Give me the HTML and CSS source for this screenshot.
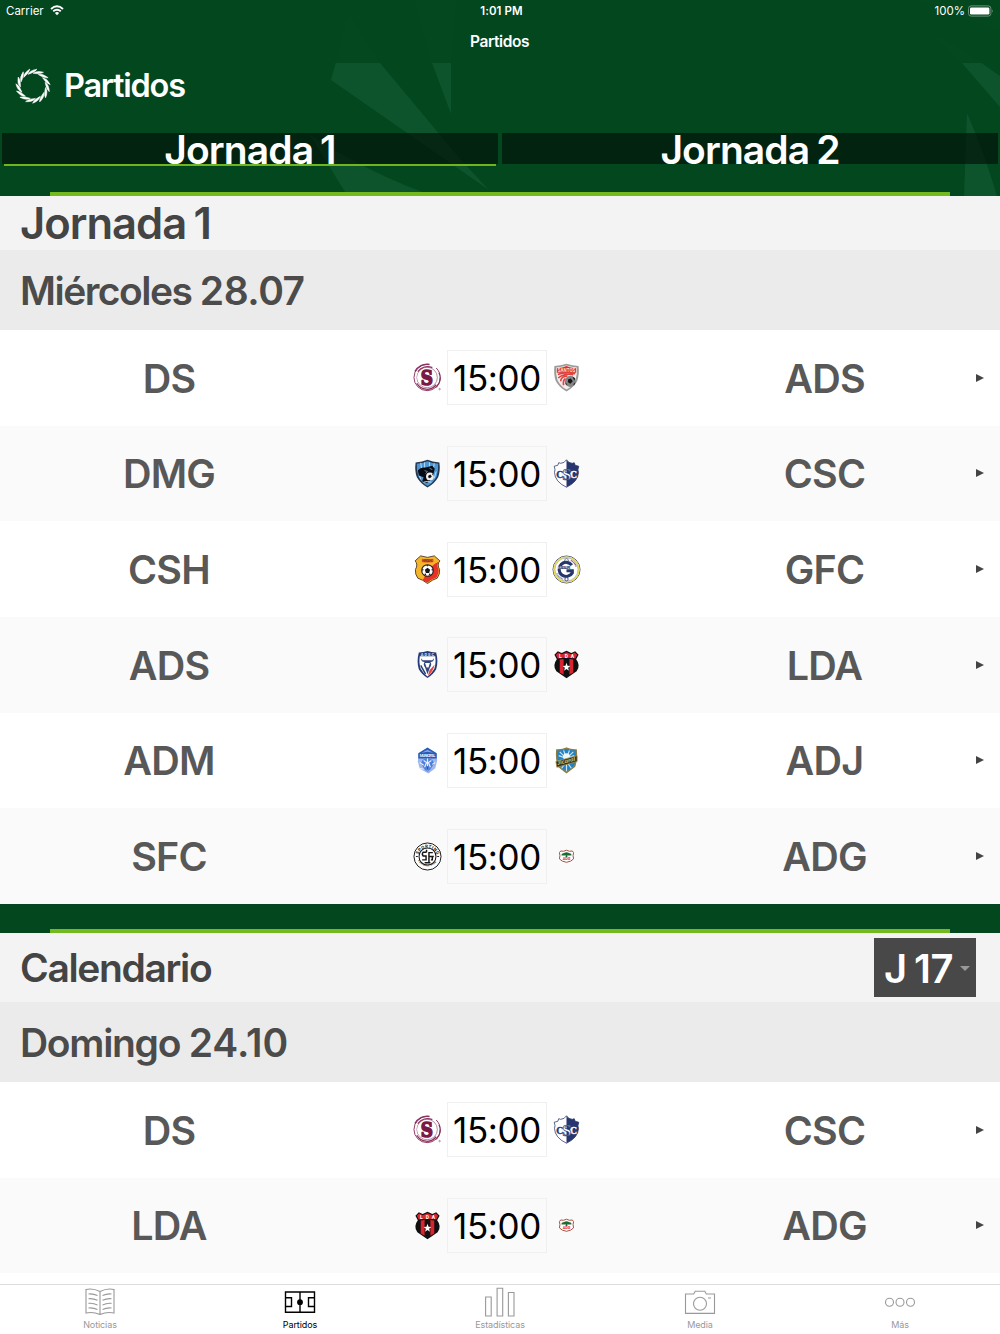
FILE: index.html
```html
<!DOCTYPE html>
<html lang="es">
<head>
<meta charset="UTF-8">
<meta name="viewport" content="width=device-width, initial-scale=1.0">
<title>Partidos</title>
<link rel="stylesheet" href="styles.css">
</head>
<body>

<!-- Escudos de los equipos -->
<svg class="sprites" aria-hidden="true">
  <symbol id="saprissa" viewBox="0 0 30 30">
    <g fill="none" stroke="#8a3560">
      <circle cx="14.6" cy="15" r="13.6" stroke-width="1" stroke-dasharray="66 8 6 6" />
      <path d="M2 9A14 14 0 0 1 17 1.5M27 10A13.5 13.5 0 0 1 24 25" stroke-width="1.5" />
      <path d="M4 21A12 12 0 0 0 24 22.5M5 9A12 12 0 0 1 20 4.8" stroke-width="1.3" />
      <circle cx="14.6" cy="15" r="10.6" stroke-width=".6" />
    </g>
    <circle cx="14" cy="15" r="9.6" fill="#fff" />
    <text x="8" y="22.8" font-family="DejaVu Serif" font-weight="bold" font-size="21.5" textLength="12.600" lengthAdjust="spacingAndGlyphs" fill="#7b1744" stroke="#7b1744" stroke-width="1.7">S</text>
    <circle cx="27.5" cy="27" r=".8" fill="none" stroke="#8a3560" stroke-width=".5" />
  </symbol>
  <symbol id="santos" viewBox="0 0 30 30">
    <path d="M2.5 3Q9 2.7 15 .8Q21 2.7 27.5 3Q28.5 12 26 19Q22 26 15 29.5Q8 26 4 19Q1.500 12 2.500 3Z" fill="#9b9b9b" />
    <path d="M4.300 4.600Q10 4.200 15 2.500Q20 4.200 25.700 4.600Q26.300 12 24.200 18Q21 24 15 27.500Q9 24 5.800 18Q3.700 12 4.300 4.600Z" fill="#f3eeee" />
    <path d="M5 5.500Q11 5 15 3.200Q19 5 25 5.500V10H5Z" fill="#d8302e" />
    <path d="M6 12Q14 8.500 24 11M6.500 15.500Q12 10.500 22 12M9 19Q9 14 16 13.500M12 23Q11 18 14 16" fill="none" stroke="#e1403c" stroke-width="1.700" />
    <text x="6" y="9.200" font-family="Roboto" font-weight="bold" font-size="4.600" textLength="18" fill="#f8dcdc">SANTOS</text>
    <circle cx="19" cy="19" r="5.700" fill="#858585" />
    <path d="M16.500 17L19.500 16L21.500 19L19 21.500L16.500 20ZM21 14L24 16L23 18ZM14 20L16 23L14 22ZM22 22L24 20L23 23Z" fill="#151515" />
  </symbol>
  <symbol id="guadalupe" viewBox="0 0 30 30">
    <circle cx="15" cy="15" r="14" fill="#fff" stroke="#26314f" stroke-width=".8" />
    <circle cx="15" cy="15" r="12.900" fill="none" stroke="#e8dc4c" stroke-width="1.300" />
    <circle cx="15" cy="15" r="11.900" fill="none" stroke="#55607b" stroke-width=".4" />
    <path d="M20.500 10.500A7.300 7.300 0 1 0 21 18.500V16.300H15" fill="none" stroke="#24366d" stroke-width="3.200" />
    <rect x="5.500" y="11.700" width="13" height="2.800" fill="#fff" />
    <text x="6" y="14.300" font-family="Roboto" font-weight="bold" font-size="3.400" textLength="13" fill="#24366d">GUADALUPE</text>
    <path d="M19.500 5.500A11 11 0 0 1 25 12" fill="none" stroke="#a95365" stroke-width="1.500" stroke-dasharray="1 .5" />
    <path d="M5 19A11 11 0 0 0 12 25" fill="none" stroke="#59617d" stroke-width="1.200" stroke-dasharray="1 .6" />
    <path d="M13 5L15 3.500L17 5L16.500 7H13.500Z" fill="none" stroke="#35415f" stroke-width=".7" />
    <circle cx="15" cy="25" r="1.700" fill="#fff" stroke="#35415f" stroke-width=".9" />
  </symbol>
  <symbol id="guapiles" viewBox="0 0 30 30">
    <path d="M2.700 3.500Q10 3 15 .8Q20 3 27.300 3.500Q28.500 12 26 19Q22 26 15 29.500Q8 26 4 19Q1.500 12 2.700 3.500Z" fill="#24364f" />
    <path d="M4 4.800Q10.500 4.300 15 2.200Q19.500 4.300 26 4.800Q26.500 12 24.500 18Q21 24.500 15 28Q9 24.500 5.500 18Q3.500 12 4 4.800Z" fill="#4b97d5" />
    <path d="M8 4L9 11M12 3.500V10M17 3.500V10M22 4.500L21 10M6 15L8 21M24 13L22 20" stroke="#bddcf2" stroke-width="1" />
    <path d="M5 12Q8 8 13 8.800L20 7L22.500 10L21 16L18 22L14 25L9.500 23L11 19L6 17Z" fill="#080b12" />
    <path d="M12 12L15 13L13 15M17 9.500L20 11" fill="none" stroke="#8ba2b8" stroke-width=".8" />
    <circle cx="17.500" cy="18" r="4" fill="#f2f2f2" />
    <path d="M16 17L18 16L19.500 18L17.500 20L15.500 19ZM20 14.500L21.500 17L20 16.500Z" fill="#111" />
    <path d="M11 24Q15 22.500 19 24" fill="none" stroke="#d4e4ef" stroke-width="1" />
  </symbol>
  <symbol id="cartagines" viewBox="0 0 30 30">
    <path d="M15 .8Q13 4.300 9 4.500L7 3.800L6 6.500L2.300 7.500Q3.800 11 2.600 14Q3 23.500 15 29.200Q27 23.500 27.400 14Q26.200 11 27.700 7.500L24 6.500L23 3.800L21 4.500Q17 4.300 15 .8Z" fill="#fff" stroke="#27366f" stroke-width=".8" />
    <path d="M15 .8Q17 4.300 21 4.500L23 3.800L24 6.500L27.700 7.500Q26.200 11 27.400 14Q27 23.500 15 29.200Z" fill="#27366f" />
    <g font-family="Liberation Serif" font-weight="bold" stroke-width=".4">
      <text x="4.300" y="19.800" font-size="10" fill="#27366f" stroke="#27366f">C</text>
      <text x="18.500" y="19.800" font-size="10" fill="#fff" stroke="#fff">C</text>
      <text x="10.500" y="21.500" font-size="17" fill="#fff" stroke="#27366f" stroke-width=".7">S</text>
    </g>
  </symbol>
  <symbol id="herediano" viewBox="0 0 30 30">
    <path d="M8 .9Q15 4 22 .9L27.800 6Q24.500 10 27.500 15Q28 20 25 24Q20 25.500 15 29.500Q10 25.500 5 24Q2 20 2.500 15Q5.500 10 2.200 6Z" fill="#f5b52a" stroke="#4b3320" stroke-width=".9" />
    <path d="M26.500 7Q18 10 10 26L15 28.500Q19 25 24.500 23Q27 19 26.500 15Q24 11 26.500 7Z" fill="#e6322b" />
    <path d="M9 3.800Q15 5.500 21 3.800V7.500Q15 8.800 9 7.500Z" fill="#e78423" />
    <text x="9.300" y="7.500" font-family="Roboto" font-weight="bold" font-size="3.300" textLength="11.500" fill="#992d24">HEREDIANO</text>
    <circle cx="15" cy="16" r="6" fill="#fff" stroke="#191919" stroke-width="1.100" />
    <path d="M15 13.300L17.700 15.300L16.700 18.500H13.300L12.300 15.300ZM13.500 10.500H16.500L15 12ZM9.500 14L11 15L10 17ZM20.500 14L19 15L20 17ZM11.500 20L13 19L14 21.500ZM18.500 20L17 19L16 21.500Z" fill="#151515" />
  </symbol>
  <symbol id="sancarlos" viewBox="0 0 30 30">
    <path d="M6 2.500Q11 2.500 15 1Q19 2.500 24 2.500Q26.500 12 24 20Q20.500 26 15 29Q9.500 26 6 20Q3.500 12 6 2.500Z" fill="#253a78" />
    <path d="M7 6.500H23Q24 14 22 19.500Q19.500 24 15 27.500Q10.500 24 8 19.500Q6 14 7 6.500Z" fill="#fff" />
    <text x="8" y="5.900" font-family="Roboto" font-weight="bold" font-size="4.200" textLength="14" fill="#dfe3ef">ADSC</text>
    <path d="M8.500 8.500Q8 12 12 12.500Q10 15 12.500 18L15 25L17.500 18Q20 15 18 12.500Q22 12 21.500 8.500L20 10.500H10Z" fill="#32477f" />
    <path d="M12.500 13.500H17.500L16 18H14Z" fill="#fff" />
    <path d="M22.500 15L17 21L15.500 26.500Q20.500 23 22.500 15Z" fill="#e9433f" />
    <path d="M8 16L13 25" stroke="#253a78" stroke-width="1.500" />
  </symbol>
  <symbol id="alajuelense" viewBox="0 0 30 30">
    <path d="M6 1.200L10 3L15 .8L20 3L24 1.200L27.500 5L25 9.500Q30 16 25.500 22L15 29.300L4.500 22Q0 16 5 9.500L2.500 5Z" fill="#101010" />
    <path d="M6.500 2.500L10 4.300L15 2.200L20 4.300L23.500 2.500L26 5L24 8.800Q15 7 6 8.800L4 5Z" fill="#da2633" />
    <text x="7.300" y="7.800" font-family="Roboto" font-weight="bold" font-size="5" textLength="15.500" fill="#fff">LDA</text>
    <path d="M8 9.700L12 9.200V25.500L8 23.300ZM18 9.200L22 9.700V23.300L18 25.500Z" fill="#d92331" />
    <path d="M15 13.300L16.100 16.300L19 16.500L16.700 18.400L17.500 21.500L15 19.700L12.500 21.500L13.300 18.400L11 16.500L13.900 16.300Z" fill="#fff" />
  </symbol>
  <symbol id="perez" viewBox="0 0 30 30">
    <path d="M15 2L24.500 7.500L25 15L23 23L16 28.500L7 23.500L5 16L5.500 7.500Z" fill="#9db8eb" />
    <path d="M15 1.500L24.500 7.500V13H5.500V7.500Z" fill="#285bb8" />
    <path d="M9 7L15 4L21 7L15 6Z" fill="#86a5df" />
    <text x="7" y="11" font-family="Roboto" font-weight="bold" font-size="4" textLength="16" fill="#e9efff">MUNICIPAL</text>
    <path d="M10 14.500Q15 11 20 14.500L22 18L18 24L15 27L12 24L8 18Z" fill="#4f7fdb" />
    <path d="M11 15L14 17L12 22M19 15L16 17L18 22M15 13V26M7 17L11 20M23 17L20 19M6 23L11 24" fill="none" stroke="#e8efff" stroke-width="1.200" />
    <path d="M14 21L16 21L15 27Z" fill="#2857b5" />
  </symbol>
  <symbol id="jicaral" viewBox="0 0 30 30">
    <path d="M5 4Q11 4.200 15 2.200Q19 4.200 25 4Q26 13 23.500 21L15 27.500L6.500 21Q4 13 5 4Z" fill="#2382c6" stroke="#8e7c43" stroke-width="1.400" />
    <path d="M15 13L8 6M15 13L12 4.500M15 13L18 4.500M15 13L22 6M15 13L7 10M15 13L23 10M15 16L10 23M15 16L15 26M15 16L20 23" stroke="#cae9f8" stroke-width="1.200" />
    <circle cx="15" cy="11" r="3.500" fill="#eaf8fc" />
    <path d="M4 16L26 10L26 16L5 22Z" fill="#332f1d" stroke="#a68e46" stroke-width=".8" />
    <text x="6" y="19.700" transform="rotate(-14 6 19.700)" font-family="Lato" font-style="italic" font-weight="bold" font-size="6" textLength="19" lengthAdjust="spacingAndGlyphs" fill="#d8c57a">Jicaral</text>
  </symbol>
  <symbol id="sporting" viewBox="0 0 30 30">
    <circle cx="15" cy="15" r="14" fill="#fff" stroke="#161616" stroke-width="1" />
    <circle cx="15" cy="15" r="8.800" fill="#fff" stroke="#161616" stroke-width="1.100" />
    <path id="arco-sup" d="M5.300 14A9.900 9.900 0 0 1 24.700 14" fill="none" />
    <path id="arco-inf" d="M4 17.500A11.800 11.800 0 0 0 26 17.500" fill="none" />
    <g font-family="Roboto" font-weight="bold" fill="#161616">
      <text font-size="4.600"><textPath href="#arco-sup" startOffset="4%" textLength="25">SPORTING</textPath></text>
      <text font-size="2.500"><textPath href="#arco-inf" startOffset="8%" textLength="22">FOOTBALL CLUB</textPath></text>
    </g>
    <path d="M14 10.500H10.500Q8.800 12.500 10.500 14.500H13.500V18.500H9.500M20.500 11H16.500V21M16.500 15H21.500M20 15V18.500H18.500M14 8V10.500M12 21.500H18" fill="none" stroke="#161616" stroke-width="1.500" />
    <path d="M3 15H5M25 15H27" stroke="#161616" stroke-width="1" />
  </symbol>
  <symbol id="guanacasteca" viewBox="0 0 30 30">
    <path d="M9 9.300Q12 10.300 15 8.500Q18 10.300 21 9.300L22.300 11Q21.300 14 22.300 17.500Q20 20.300 15 21Q10 20.300 7.700 17.500Q8.700 14 7.700 11Z" fill="#fff" stroke="#a8483c" stroke-width="1" />
    <path d="M9.600 13.700Q9.600 12 12.500 11.500Q15 9.900 17.500 11.500Q20.400 12 20.400 13.700Q17 14.200 15.800 13.700L16 15.500H14L14.200 13.700Q12 14.200 9.600 13.700Z" fill="#1d6b32" />
    <text x="11" y="18.800" font-family="Roboto" font-weight="bold" font-size="4.500" textLength="8" lengthAdjust="spacingAndGlyphs" fill="#e3241d">ADG</text>
  </symbol>
</svg>

<div class="screen">
  <header class="header">
    <svg class="header-art" viewBox="0 0 1000 196" preserveAspectRatio="none" aria-hidden="true">
      <path d="M349 15L331 80L489 190L461 160L380 63ZM415 0L432 63L451 114V63L456 0ZM310 135L345 192H422Q360 168 310 135ZM934 34L961 62L1000 107V76L980 62ZM967 113L964 196H997Q984 152 967 113ZM918 0L1000 31V12L965 0Z" />
    </svg>
    <div class="nav">
      <div class="status">
        <div class="status-side">
          <span>Carrier</span>
          <svg width="14" height="11" viewBox="0 0 14 11">
            <path d="M1 4Q7 -1.300 13 4M3.200 6.300Q7 3.200 10.800 6.300" fill="none" stroke="#fff" stroke-width="1.900" />
            <path d="M4.900 7.900Q7 6.300 9.100 7.900L7 10.200Z" fill="#fff" />
          </svg>
        </div>
        <strong>1:01 PM</strong>
        <div class="status-side right">
          <span>100%</span>
          <svg width="26" height="12" viewBox="0 0 26 12">
            <rect x=".5" y=".9" width="22.400" height="10.200" rx="2.600" fill="none" stroke="#6b9079" />
            <rect x="2" y="2.400" width="19.400" height="7.200" rx="1.300" fill="#fff" />
            <path d="M24.200 4.500Q25.600 6 24.200 7.500Z" fill="#8aa795" />
          </svg>
        </div>
      </div>
      <div class="nav-title">Partidos</div>
    </div>

    <div class="brand">
      <svg class="brand-logo" viewBox="-18 -18 36 36">
        <g fill="#fff" stroke="#fff" stroke-width=".5">
          <path id="hoja" d="M-5 -11.600Q-3 -15.900 4 -16.800Q2.200 -13.700 -5 -11.600Z" />
          <use href="#hoja" transform="rotate(24)" />
          <use href="#hoja" transform="rotate(48)" />
          <use href="#hoja" transform="rotate(72)" />
          <use href="#hoja" transform="rotate(96)" />
          <use href="#hoja" transform="rotate(120)" />
          <use href="#hoja" transform="rotate(144)" />
          <use href="#hoja" transform="rotate(168)" />
          <use href="#hoja" transform="rotate(192)" />
          <use href="#hoja" transform="rotate(216)" />
          <use href="#hoja" transform="rotate(240)" />
          <use href="#hoja" transform="rotate(264)" />
          <use href="#hoja" transform="rotate(288)" />
          <use href="#hoja" transform="rotate(312)" />
          <use href="#hoja" transform="rotate(336)" />
        </g>
      </svg>
      <h1>Partidos</h1>
    </div>

    <div class="tabs">
      <div class="tab active">Jornada 1</div>
      <div class="tab">Jornada 2</div>
    </div>
    <div class="line"></div>
  </header>

  <main class="content">
    <h2 class="title title-jornada">Jornada 1</h2>
    <h3 class="date">Miércoles <span>28.07</span></h3>
    <div class="matches">
      <div class="match">
        <span class="team">DS</span>
        <div class="score"><svg><use href="#saprissa" /></svg><span class="time">15:00</span><svg><use href="#santos" /></svg></div>
        <span class="team away">ADS</span><i class="arrow"></i>
      </div>
      <div class="match">
        <span class="team">DMG</span>
        <div class="score"><svg><use href="#guapiles" /></svg><span class="time">15:00</span><svg><use href="#cartagines" /></svg></div>
        <span class="team away">CSC</span><i class="arrow"></i>
      </div>
      <div class="match">
        <span class="team">CSH</span>
        <div class="score"><svg><use href="#herediano" /></svg><span class="time">15:00</span><svg><use href="#guadalupe" /></svg></div>
        <span class="team away">GFC</span><i class="arrow"></i>
      </div>
      <div class="match">
        <span class="team">ADS</span>
        <div class="score"><svg><use href="#sancarlos" /></svg><span class="time">15:00</span><svg><use href="#alajuelense" /></svg></div>
        <span class="team away">LDA</span><i class="arrow"></i>
      </div>
      <div class="match">
        <span class="team">ADM</span>
        <div class="score"><svg><use href="#perez" /></svg><span class="time">15:00</span><svg><use href="#jicaral" /></svg></div>
        <span class="team away">ADJ</span><i class="arrow"></i>
      </div>
      <div class="match">
        <span class="team">SFC</span>
        <div class="score"><svg><use href="#sporting" /></svg><span class="time">15:00</span><svg><use href="#guanacasteca" /></svg></div>
        <span class="team away">ADG</span><i class="arrow"></i>
      </div>
    </div>

    <div class="divider"><div class="line"></div></div>

    <div class="title title-calendario">
      <h2>Calendario</h2>
      <div class="select">J 17<i></i></div>
    </div>
    <h3 class="date date-domingo">Domingo <span>24.10</span></h3>
    <div class="matches">
      <div class="match">
        <span class="team">DS</span>
        <div class="score"><svg><use href="#saprissa" /></svg><span class="time">15:00</span><svg><use href="#cartagines" /></svg></div>
        <span class="team away">CSC</span><i class="arrow"></i>
      </div>
      <div class="match">
        <span class="team">LDA</span>
        <div class="score"><svg><use href="#alajuelense" /></svg><span class="time">15:00</span><svg><use href="#guanacasteca" /></svg></div>
        <span class="team away">ADG</span><i class="arrow"></i>
      </div>
    </div>
  </main>

  <nav class="tabbar">
    <a>
      <svg viewBox="0 0 32 32">
        <path d="M16 5.500Q9 2 2 3.500V27Q9 25.500 16 28.500Q23 25.500 30 27V3.500Q23 2 16 5.500V28.500M4.500 8Q9 7.500 13.500 9.500M4.500 12.700Q9 12.200 13.500 14.200M4.500 17.400Q9 16.900 13.500 18.900M4.500 22Q9 21.500 13.500 23.500M27.500 8Q23 7.500 18.500 9.500M27.500 12.700Q23 12.200 18.500 14.200M27.500 17.400Q23 16.900 18.500 18.900M27.500 22Q23 21.500 18.500 23.500" />
      </svg>
      Noticias
    </a>
    <a class="current">
      <svg viewBox="0 0 32 32">
        <path d="M1.500 6H30.500V26.300H1.500ZM16 6V26.300M1.500 11.800H7.500V20.500H1.500M30.500 11.800H24.500V20.500H30.500" />
        <circle cx="16" cy="16.200" r="2.200" fill="#000" />
      </svg>
      Partidos
    </a>
    <a>
      <svg viewBox="0 0 32 32">
        <path d="M1.600 11H7.200V30H1.600ZM13.100 2.200H18.700V30H13.100ZM24.400 6.500H30V30H24.400Z" />
      </svg>
      Estadísticas
    </a>
    <a>
      <svg viewBox="0 0 32 32">
        <path d="M1.500 8H9.700L11.200 5.200H20.800L22.300 8H30.500V27.400H1.500ZM24 12H27" />
        <circle cx="16" cy="17.800" r="6.500" />
      </svg>
      Media
    </a>
    <a>
      <svg viewBox="0 0 32 32">
        <circle cx="5.500" cy="16.300" r="4" /><circle cx="16" cy="16.300" r="4" /><circle cx="26.500" cy="16.300" r="4" />
      </svg>
      Más
    </a>
  </nav>
</div>

</body>
</html>
```

FILE: styles.css
```css
* {
  box-sizing: border-box;
}

body {
  margin: 0;
  font-family: Inter, "Liberation Sans", sans-serif;
  background-color: #fff;
}

h1, h2, h3 {
  margin: 0;
  font-weight: 600;
}

.sprites {
  display: none;
}

.screen {
  display: flex;
  flex-direction: column;
  width: 1000px;
  height: 1334px;
  overflow: hidden;
}

/* Cabecera */
.header {
  position: relative;
  display: flex;
  flex-direction: column;
  flex: none;
  height: 195.5px;
  background-color: #03471f;
  color: #fff;
}

.header-art {
  position: absolute;
  left: 0;
  top: 0;
  width: 1000px;
  height: 196px;
  fill: #0d542c;
}

.nav {
  position: relative;
  height: 62.5px;
  background-color: rgba(3, 71, 31, 0.9);
}

.status {
  display: grid;
  grid-template-columns: 1fr auto 1fr;
  align-items: center;
  height: 21px;
  padding: 0 6px;
  font-size: 11.5px;
}

.status strong {
  font-weight: 600;
  padding-left: 3px;
  letter-spacing: 0.1px;
}

.status-side {
  display: flex;
  align-items: center;
  gap: 6px;
}

.status-side.right {
  justify-content: flex-end;
  gap: 3px;
}

.nav-title {
  padding-right: 1px;
  text-align: center;
  font-size: 15.5px;
  line-height: 42px;
  font-weight: 600;
  letter-spacing: -0.4px;
}

.brand {
  position: relative;
  display: flex;
  align-items: center;
  height: 46px;
  padding-left: 15px;
}

.brand-logo {
  width: 36px;
  height: 36px;
}

.brand h1 {
  margin-left: 13px;
  font-size: 32.5px;
  letter-spacing: -1.25px;
}

.tabs {
  position: relative;
  display: grid;
  grid-template-columns: 1fr 1fr;
  gap: 4px;
  height: 31px;
  margin: 24.5px 2px 0;
}

.tab {
  height: 31px;
  text-align: center;
  font-size: 39px;
  line-height: 33px;
  font-weight: 600;
  letter-spacing: -0.9px;
  word-spacing: -2px;
  background-color: rgba(3, 20, 10, 0.7);
}

.tab.active::after {
  content: "";
  display: block;
  height: 2px;
  margin: -2px 2px 0;
  background-color: #6fb51d;
}

.line {
  position: relative;
  height: 4px;
  margin: auto 50px 0;
  background-color: #74ba1e;
}

/* Contenido */
.content {
  flex: 1;
  min-height: 0;
  overflow: hidden;
  color: #444;
}

.title {
  padding-left: 20px;
  background-color: #f3f3f3;
}

.title-jornada {
  height: 54.5px;
  font-size: 43.5px;
  line-height: 55px;
  letter-spacing: -1px;
  word-spacing: -2.5px;
}

.title-calendario {
  display: flex;
  align-items: center;
  justify-content: space-between;
  height: 68.5px;
  padding-right: 24px;
}

.title-calendario h2 {
  font-size: 39px;
  line-height: 70px;
  letter-spacing: -1.35px;
}

.select {
  display: flex;
  align-items: center;
  width: 102px;
  height: 59px;
  padding-left: 10px;
  padding-top: 2px;
  font-size: 40px;
  font-weight: 600;
  letter-spacing: -0.6px;
  word-spacing: -2px;
  color: #fff;
  background-color: #484848;
}

.select i {
  margin-left: auto;
  margin-right: 6px;
  border: 5px solid transparent;
  border-top-color: #999;
  border-bottom: 0;
}

.date {
  height: 80px;
  padding-left: 20px;
  font-size: 39px;
  line-height: 82px;
  letter-spacing: -1.5px;
  color: #4b4b4b;
  background-color: #ebebeb;
}

.date-domingo {
  letter-spacing: -1.3px;
}

.date span {
  letter-spacing: -0.5px;
}

.date-domingo span {
  letter-spacing: 0;
}

.match {
  display: grid;
  grid-template-columns: 338px 318px 320px 24px;
  align-items: center;
  height: 95.67px;
  background-color: #fff;
}

.match:nth-child(even) {
  background-color: #fafafa;
}

.team {
  padding-top: 2px;
  text-align: center;
  font-size: 39.5px;
  line-height: 50px;
  font-weight: 600;
  letter-spacing: -0.8px;
  color: #585858;
}

.team.away {
  padding-left: 17px;
}

.score {
  display: flex;
  align-items: center;
  justify-content: center;
  gap: 5px;
}

.score svg {
  width: 29px;
  height: 29px;
}

.time {
  width: 100px;
  height: 55px;
  border: 1px solid #f0f0f0;
  text-align: center;
  font-size: 35px;
  line-height: 54px;
  letter-spacing: -0.4px;
  color: #000;
}

.arrow {
  width: 0;
  border: 4.5px solid transparent;
  border-left: 8px solid #444;
  border-right: 0;
}

.divider {
  display: flex;
  flex-direction: column;
  height: 29.5px;
  background-color: #03471f;
}

/* Barra inferior */
.tabbar {
  display: grid;
  grid-template-columns: repeat(5, 1fr);
  flex: none;
  height: 50px;
  border-top: 1px solid #dcdcdc;
  background-color: #fff;
}

.tabbar a {
  display: flex;
  flex-direction: column;
  align-items: center;
  padding-top: 1px;
  font-size: 9px;
  line-height: 14px;
  letter-spacing: -0.1px;
  color: #999;
}

.tabbar svg {
  width: 32px;
  height: 32px;
  fill: none;
  stroke: #999;
  stroke-width: 1.1;
}

.tabbar .current {
  color: #000;
}

.tabbar .current svg {
  stroke: #000;
  stroke-width: 1.4;
}
```
